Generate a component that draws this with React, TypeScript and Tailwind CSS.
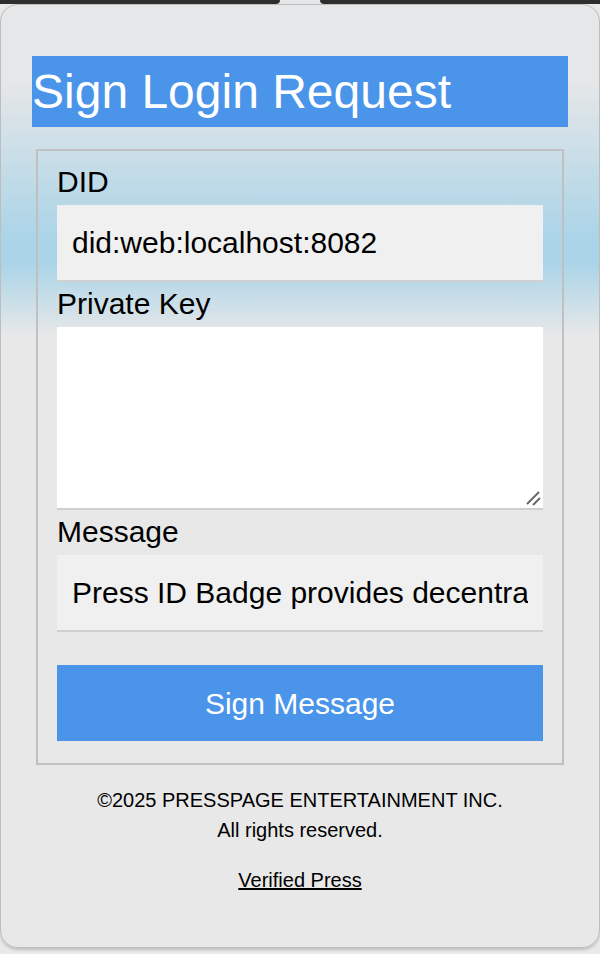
import React from 'react';

const font = { fontFamily: '"Liberation Sans", Arial, Helvetica, sans-serif' };

function Field({ label, children }: { label: string; children: React.ReactNode }) {
  return (
    <>
      <label className="block text-[30px] leading-[34px] text-black mt-[5px] mb-[6px] first:mt-0">{label}</label>
      {children}
    </>
  );
}

export default function App() {
  return (
    <div className="w-[600px] h-[954px] bg-[#e9e9e9] overflow-hidden" style={font}>
      {/* toolbar edge above the popover, with the arrow notch */}
      <div className="flex h-[4px] bg-[#e5e6e7]">
        <div className="w-[280px] bg-[#2e2e2e] rounded-br-[5px]" />
        <div className="flex-1" />
        <div className="w-[280px] bg-[#2e2e2e] rounded-bl-[5px]" />
      </div>

      <div className="h-[944px] rounded-[18px] border border-[#bdbdbd] shadow-[0_2px_3px_rgba(0,0,0,0.18)] bg-[linear-gradient(to_bottom,#e6e7e8_0px,#e6e7e8_75px,#aad4e8_235px,#aad4e8_258px,#e8e8e8_332px,#e8e8e8_100%)]">
        <h1 className="mx-[31px] mt-[51px] bg-[#4a94ea] text-white text-[48px] leading-[55px] py-2 font-normal">
          Sign Login Request
        </h1>

        <div className="mx-[35px] mt-[22px] border-2 border-[#c0c0c0] px-[19px] pt-[14px] pb-[22px]">
          <Field label="DID">
            <input
              readOnly
              value="did:web:localhost:8082"
              className="block w-full h-[77px] bg-[#f0f0f0] px-[15px] text-[30px] text-black border-0 border-b-2 border-[#cfcfcf] outline-none"
            />
          </Field>
          <Field label="Private Key">
            <div className="relative">
              <textarea className="block w-full h-[183px] bg-white border-0 border-b-2 border-[#cfcfcf] outline-none px-[15px] text-[30px] resize-none" />
              <svg className="absolute right-[2px] bottom-[4px] w-[16px] h-[16px]" viewBox="0 0 16 16">
                <path d="M2 14 L14 2 M8 15 L15 8" stroke="#6b6b6b" strokeWidth="2" strokeLinecap="butt" fill="none" />
              </svg>
            </div>
          </Field>
          <Field label="Message">
            <input
              readOnly
              value="Press ID Badge provides decentralized identity verification"
              className="block w-full h-[77px] bg-[#f0f0f0] px-[15px] text-[30px] text-black border-0 border-b-2 border-[#cfcfcf] outline-none"
            />
          </Field>
          <button className="block w-full h-[76px] mt-[33px] bg-[#4a94ea] text-white text-[30px]">
            Sign Message
          </button>
        </div>

        <div className="text-center text-black text-[20px] leading-[30px] mt-[20px]">
          <p>©2025 PRESSPAGE ENTERTAINMENT INC.</p>
          <p>All rights reserved.</p>
          <p className="mt-[20px]">
            <a href="#" className="underline text-black">Verified Press</a>
          </p>
        </div>
      </div>
    </div>
  );
}
